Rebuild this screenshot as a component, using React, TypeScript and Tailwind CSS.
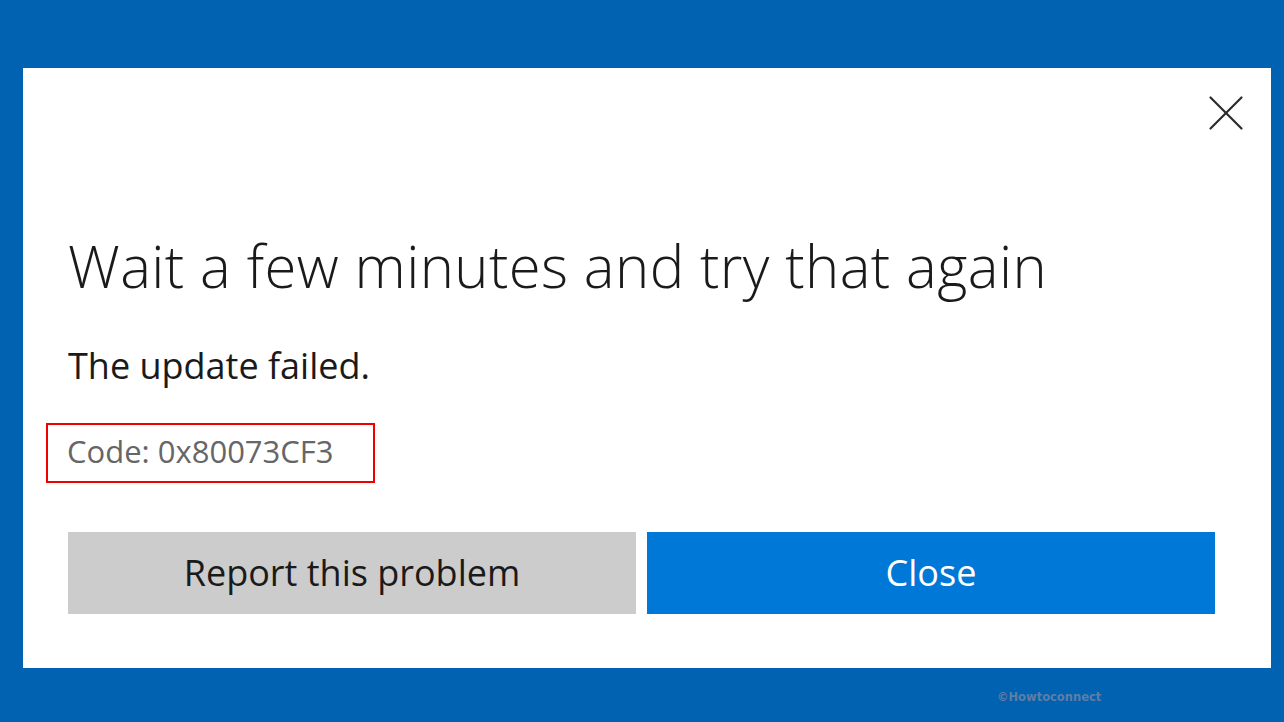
import { X } from 'lucide-react';

const font = { fontFamily: '"Open Sans", "Noto Sans", sans-serif' };

export default function App() {
  return (
    <div className="flex h-[722px] w-[1284px] flex-col bg-[#0062b0]" style={font}>
      <div className="pl-[23px] pr-[13px] pt-[68px]">
        <div className="relative flex h-[600px] flex-col bg-white pl-[45px] pr-[55px]">
          <button className="absolute right-[14px] top-[14px] text-[#2b2b2b]">
            <X size={62} strokeWidth={0.85} />
          </button>
          <h1 className="mt-[166px] text-[58px] font-light leading-[64px] tracking-[0.4px] text-[#1a1a1a]">
            Wait a few minutes and try that again
          </h1>
          <p className="mt-[48px] text-[36px] leading-[40px] text-[#1a1a1a]">The update failed.</p>
          <div className="-ml-[22px] mt-[37px] w-[329px] border-2 border-[#f00000] pb-[4px] pl-[19px]">
            <span className="text-[31px] leading-[52px] text-[#666]">Code: 0x80073CF3</span>
          </div>
          <div className="mt-[49px] flex gap-[11px]">
            <button className="flex h-[82px] w-[568px] items-center justify-center bg-[#cccccc] text-[36px] text-[#1a1a1a]">
              Report this problem
            </button>
            <button className="flex h-[82px] w-[568px] items-center justify-center bg-[#0078d7] text-[36px] text-white">
              Close
            </button>
          </div>
        </div>
      </div>
      <div className="flex flex-1 items-center pl-[997px] pt-[6px]">
        <span
          className="text-[11.5px] font-bold text-[#5f7ea6]"
          style={{ fontFamily: '"DejaVu Sans", sans-serif' }}
        >
          ©Howtoconnect
        </span>
      </div>
    </div>
  );
}
